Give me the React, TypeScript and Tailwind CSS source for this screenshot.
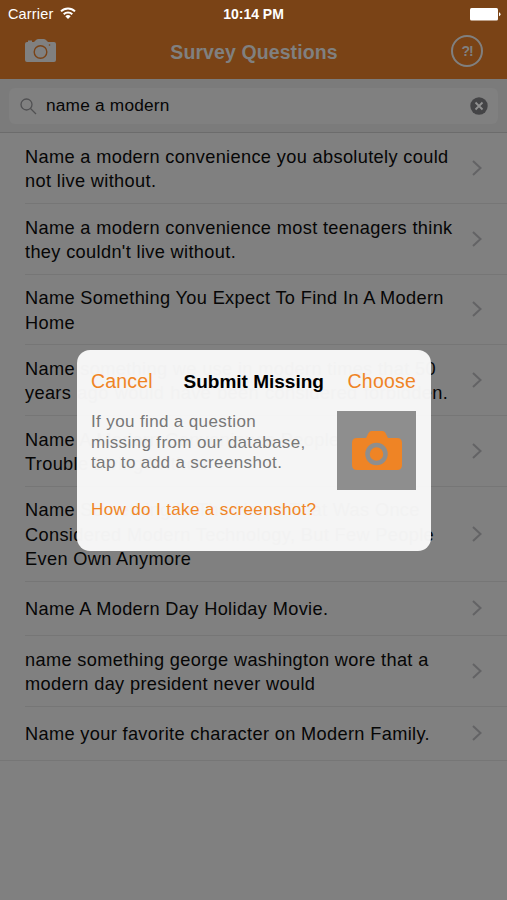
const rows: { lines: string[]; height: string; spacing?: string }[] = [
  { lines: ["Name a modern convenience you absolutely could", "not live without."], height: "h-[71px]" },
  { lines: ["Name a modern convenience most teenagers think", "they couldn't live without."], height: "h-[71px]" },
  { lines: ["Name Something You Expect To Find In A Modern", "Home"], height: "h-[70px]" },
  {
    lines: ["Name something we use in modern times that 50", "years ago would have been considered forbidden."],
    height: "h-[71px]",
    spacing: "[&>div:last-child]:[word-spacing:0.7px]",
  },
  { lines: ["Name A Modern Convenience People Have", "Trouble Living Without"], height: "h-[71px]" },
  { lines: ["Name Something In The Home That Was Once", "Considered Modern Technology, But Few People", "Even Own Anymore"], height: "h-[95px]" },
  { lines: ["Name A Modern Day Holiday Movie."], height: "h-[54px]" },
  { lines: ["name something george washington wore that a", "modern day president never would"], height: "h-[71px]" },
  { lines: ["Name your favorite character on Modern Family."], height: "h-[53px]" },
];

function StatusBar() {
  return (
    <div className="grid h-7 grid-cols-3 items-center pr-[6px] pl-2 text-white">
      <div className="flex items-center gap-[7px] pt-px text-[14.5px] tracking-[0.15px]">
        <span>Carrier</span>
        <svg className="-mt-[3px]" width="16" height="12" viewBox="0 0 16 12" fill="none" stroke="currentColor" strokeWidth="2">
          <path d="M1 4.4a10 10 0 0 1 14 0" />
          <path d="M3.7 7.2a6.2 6.2 0 0 1 8.6 0" />
          <path d="M8 12 5.3 9.2a3.9 3.9 0 0 1 5.4 0z" fill="currentColor" stroke="none" />
        </svg>
      </div>
      <span className="pr-[2px] text-center text-[14px] font-bold whitespace-nowrap">10:14 PM</span>
      <svg className="justify-self-end" width="31" height="13" viewBox="0 0 31 13" fill="currentColor">
        <rect width="28" height="12.5" rx="1.5" />
        <path d="M29 4.3q1.5.4 1.5 2t-1.5 2z" />
      </svg>
    </div>
  );
}

function NavBar() {
  return (
    <div className="flex h-[51px] items-center justify-between pr-[24px] pb-[5px] pl-[25px]">
      <svg width="32" height="25" viewBox="0 0 32 25">
        <path d="M2 3h1V1.5h4V3h2l2-2Q12 0 13.5 0h5Q20 0 21 1l2 2h6q2 0 2 2v16q0 2-2 2H2q-2 0-2-2V5q0-2 2-2z" fill="#808080" />
        <circle cx="15.5" cy="13" r="6.3" fill="none" stroke="#7a4316" strokeWidth="1.4" />
        <circle cx="24.5" cy="6" r=".8" fill="#7a4316" />
      </svg>
      <h1 className="pt-[4px] text-[19.5px] font-bold tracking-[0.1px] text-[#808080]">Survey Questions</h1>
      <div className="flex size-8 items-center justify-center rounded-full border-2 border-[#808080] text-[14px] font-bold tracking-[-1px] text-[#808080]">
        ?!
      </div>
    </div>
  );
}

function SearchBar() {
  return (
    <div className="h-[54px] border-b border-[#6c6c6c] bg-[#7b7b7b] px-[9px] pt-[9px] pb-2">
      <div className="flex h-9 items-center rounded-md bg-[#808080] pr-[10px] pl-[11px]">
        <svg width="17" height="17" viewBox="0 0 17 17" fill="none" stroke="#505052" strokeWidth="1.3">
          <circle cx="6.5" cy="6.5" r="5.5" />
          <path d="m10.5 10.5 5.5 5.5" />
        </svg>
        <span className="ml-[9px] text-[17.3px] tracking-[0.2px] text-[#060606]">name a modern</span>
        <svg className="ml-auto" width="18" height="18" viewBox="0 0 18 18">
          <circle cx="9" cy="9" r="8.7" fill="#444446" />
          <path d="m5.5 5.5 7 7m0-7-7 7" stroke="#909090" strokeWidth="1.8" />
        </svg>
      </div>
    </div>
  );
}

function CameraTile() {
  return (
    <div className="flex h-[79px] w-[79px] items-center justify-center bg-[#8e8e8e]">
      <svg width="50" height="39" viewBox="0 0 50 39" fill="#ef8425">
        <path d="M5 7h9l2.5-5q1.2-2 3-2h11q2 0 3 2L36 7h9q5 0 5 5v22q0 5-5 5H5q-5 0-5-5V12q0-5 5-5z" />
        <circle cx="24.5" cy="23" r="9" stroke="#8e8e8e" strokeWidth="4.5" />
      </svg>
    </div>
  );
}

export default function App() {
  return (
    <div className="relative h-[900px] w-[507px] overflow-hidden bg-[#808080] font-['Liberation_Sans',Arial,sans-serif]">
      <header className="bg-[#7a4316]">
        <StatusBar />
        <NavBar />
      </header>
      <SearchBar />
      <ul className="border-b border-[#767676]">
        {rows.map((row, i) => (
          <li key={row.lines[0]} className={`${row.height} pl-[25px]`}>
            <div className={`flex h-full items-center justify-between pr-[25px] ${i < rows.length - 1 ? "border-b border-[#767676]" : ""}`}>
              <div className={`pt-[2px] text-[18.2px] leading-[24.5px] tracking-[0.35px] whitespace-nowrap text-[#060606] ${row.spacing ?? ""}`}>
                {row.lines.map((line) => (
                  <div key={line}>{line}</div>
                ))}
              </div>
              <svg className="-mt-px shrink-0" width="10" height="16" viewBox="0 0 10 16" fill="none" stroke="#636365" strokeWidth="2">
                <path d="m1 1 7.5 7L1 15" />
              </svg>
            </div>
          </li>
        ))}
      </ul>

      <section className="absolute top-[350px] left-[77px] h-[201px] w-[354px] rounded-[13px] bg-[#f7f7f7]/98 pt-[19px] pr-[15px] pl-[14px]">
        <div className="flex h-[26px] items-center justify-between text-[19.5px] tracking-[0.2px]">
          <button className="text-[#ef8425]">Cancel</button>
          <h2 className="pl-[7px] text-[19px] font-bold tracking-normal text-black">Submit Missing</h2>
          <button className="text-[#ef8425]">Choose</button>
        </div>
        <div className="mt-4 flex justify-between tracking-[0.37px]">
          <div>
            <p className="pt-px text-[17px] leading-[20.5px] whitespace-nowrap text-[#777]">
              If you find a question
              <br />
              missing from our database,
              <br />
              tap to add a screenshot.
            </p>
            <button className="mt-[25px] text-[17px] leading-[22px] whitespace-nowrap text-[#ef8425]">How do I take a screenshot?</button>
          </div>
          <CameraTile />
        </div>
      </section>
    </div>
  );
}
